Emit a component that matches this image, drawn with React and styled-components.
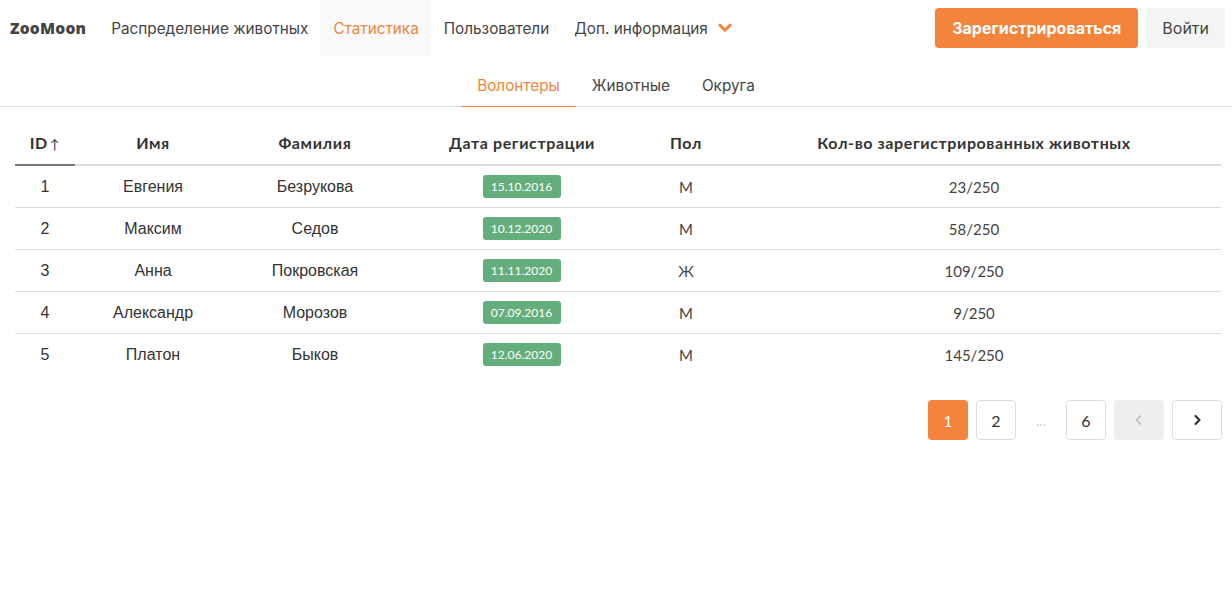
import React from 'react';
import styled, { createGlobalStyle } from 'styled-components';

const ORANGE = '#f2843c';

const GlobalStyle = createGlobalStyle`
  body {
    margin: 0;
    background: #fff;
    font-family: Inter, "Noto Sans", sans-serif;
    color: #444;
  }
`;

const Header = styled.header`
  display: flex;
  align-items: center;
  height: 56px;
  padding: 0 7px 0 10px;
`;

const Logo = styled.div`
  font-family: "Open Sans", sans-serif;
  font-weight: 800;
  font-size: 15.6px;
  letter-spacing: 0.2px;
  color: #444;
  margin-right: 12px;
`;

const Nav = styled.nav`
  display: flex;
  align-self: stretch;
  flex: 1;
`;

const NavItem = styled.div`
  display: flex;
  align-items: center;
  gap: 9px;
  padding: 0 12px 0 13px;
  font-size: 15.3px;
  color: ${p => (p.$active ? ORANGE : '#444')};
  background: ${p => (p.$active ? '#f9f9f9' : 'transparent')};
  cursor: pointer;
`;

const Actions = styled.div`
  display: flex;
  gap: 8px;
`;

const Button = styled.button`
  height: 40px;
  border: none;
  border-radius: 4px;
  font-size: 16px;
  font-family: Inter, sans-serif;
  cursor: pointer;
  padding: ${p => (p.$primary ? '0 17px' : '0 16px')};
  background: ${p => (p.$primary ? ORANGE : '#f4f4f4')};
  color: ${p => (p.$primary ? '#fff' : '#444')};
  font-weight: ${p => (p.$primary ? 700 : 400)};
`;

const Tabs = styled.div`
  display: flex;
  justify-content: center;
  margin-top: 9px;
  border-bottom: 1px solid #ddd;
`;

const Tab = styled.div`
  padding: 11px 16px 11px;
  font-size: 15.3px;
  color: ${p => (p.$active ? ORANGE : '#444')};
  border-bottom: 1px solid ${p => (p.$active ? ORANGE : 'transparent')};
  margin-bottom: -1px;
  cursor: pointer;
`;

const TableWrap = styled.div`
  padding: 14px 11px 0 15px;
`;

const Table = styled.table`
  width: 100%;
  border-collapse: collapse;
  table-layout: fixed;
`;

const Th = styled.th`
  font-family: Lato, sans-serif;
  font-weight: 700;
  font-size: 16px;
  letter-spacing: 0.6px;
  color: #333;
  height: 43px;
  padding: 0;
  text-align: center;
  border-bottom: 2px solid ${p => (p.$sorted ? '#777' : '#ddd')};
  width: ${p => p.$w}px;
`;

const Arrow = styled.span`
  font-weight: 400;
  font-size: 13px;
  margin-left: 2px;
`;

const Tr = styled.tr`
  & + & td {
    border-top: 1px solid #ddd;
  }
`;

const Td = styled.td`
  height: 41px;
  padding: 0;
  text-align: center;
  font-family: ${p => (p.$lato ? 'Lato, sans-serif' : '"Liberation Sans", Arial, sans-serif')};
  font-size: ${p => (p.$lato ? 15 : 16)}px;
  color: ${p => (p.$lato ? '#444' : '#333')};
`;

const DateBadge = styled.span`
  display: inline-block;
  background: #63ae7c;
  color: #fff;
  font-family: Lato, sans-serif;
  font-size: 12px;
  line-height: 23px;
  padding: 0 9px 0 8px;
  border-radius: 3px;
`;

const Pagination = styled.div`
  display: flex;
  justify-content: flex-end;
  align-items: center;
  gap: 8px;
  padding: 25px 10px 0 0;
`;

const PageButton = styled.div`
  box-sizing: border-box;
  display: flex;
  align-items: center;
  justify-content: center;
  width: ${p => (p.$wide ? 50 : 40)}px;
  height: 40px;
  border-radius: 4px;
  font-family: Lato, sans-serif;
  font-size: 16px;
  border: 1px solid ${p => (p.$active || p.$disabled ? 'transparent' : '#ddd')};
  background: ${p => (p.$active ? ORANGE : p.$disabled ? '#eee' : '#fff')};
  color: ${p => (p.$active ? '#fff' : p.$disabled ? '#bbb' : '#333')};
  cursor: ${p => (p.$disabled ? 'default' : 'pointer')};
`;

const Dots = styled.div`
  width: 34px;
  text-align: center;
  color: #ccc;
  font-family: Lato, sans-serif;
  font-size: 14px;
`;

const Chevron = ({ dir = 'down', color, size = 14, width = 2.4 }) => {
  const paths = {
    down: 'M2.5 4.5l4.5 4.5 4.5-4.5',
    left: 'M8.5 3L4.5 7l4 4',
    right: 'M5.5 3l4 4-4 4',
  };
  return (
    <svg width={size} height={size} viewBox="0 0 14 14" fill="none">
      <path d={paths[dir]} stroke={color} strokeWidth={width} strokeLinecap="round" strokeLinejoin="round" />
    </svg>
  );
};

const volunteers = [
  { id: 1, name: 'Евгения', surname: 'Безрукова', date: '15.10.2016', sex: 'М', count: '23/250' },
  { id: 2, name: 'Максим', surname: 'Седов', date: '10.12.2020', sex: 'М', count: '58/250' },
  { id: 3, name: 'Анна', surname: 'Покровская', date: '11.11.2020', sex: 'Ж', count: '109/250' },
  { id: 4, name: 'Александр', surname: 'Морозов', date: '07.09.2016', sex: 'М', count: '9/250' },
  { id: 5, name: 'Платон', surname: 'Быков', date: '12.06.2020', sex: 'М', count: '145/250' },
];

const App = () => (
  <>
    <GlobalStyle />
    <Header>
      <Logo>ZooMoon</Logo>
      <Nav>
        <NavItem>Распределение животных</NavItem>
        <NavItem $active>Статистика</NavItem>
        <NavItem>Пользователи</NavItem>
        <NavItem>
          Доп. информация
          <Chevron color={ORANGE} size={16} width={2.6} />
        </NavItem>
      </Nav>
      <Actions>
        <Button $primary>Зарегистрироваться</Button>
        <Button>Войти</Button>
      </Actions>
    </Header>

    <Tabs>
      <Tab $active>Волонтеры</Tab>
      <Tab>Животные</Tab>
      <Tab>Округа</Tab>
    </Tabs>

    <TableWrap>
      <Table>
        <thead>
          <tr>
            <Th $w={60} $sorted>ID<Arrow>↑</Arrow></Th>
            <Th $w={156}>Имя</Th>
            <Th $w={168}>Фамилия</Th>
            <Th $w={246}>Дата регистрации</Th>
            <Th $w={82}>Пол</Th>
            <Th>Кол-во зарегистрированных животных</Th>
          </tr>
        </thead>
        <tbody>
          {volunteers.map(v => (
            <Tr key={v.id}>
              <Td>{v.id}</Td>
              <Td>{v.name}</Td>
              <Td>{v.surname}</Td>
              <Td><DateBadge>{v.date}</DateBadge></Td>
              <Td $lato>{v.sex}</Td>
              <Td $lato>{v.count}</Td>
            </Tr>
          ))}
        </tbody>
      </Table>
    </TableWrap>

    <Pagination>
      <PageButton $active>1</PageButton>
      <PageButton>2</PageButton>
      <Dots>...</Dots>
      <PageButton>6</PageButton>
      <PageButton $wide $disabled><Chevron dir="left" color="#bbb" width={1.6} /></PageButton>
      <PageButton $wide><Chevron dir="right" color="#333" width={2.2} /></PageButton>
    </Pagination>
  </>
);

export default App;
